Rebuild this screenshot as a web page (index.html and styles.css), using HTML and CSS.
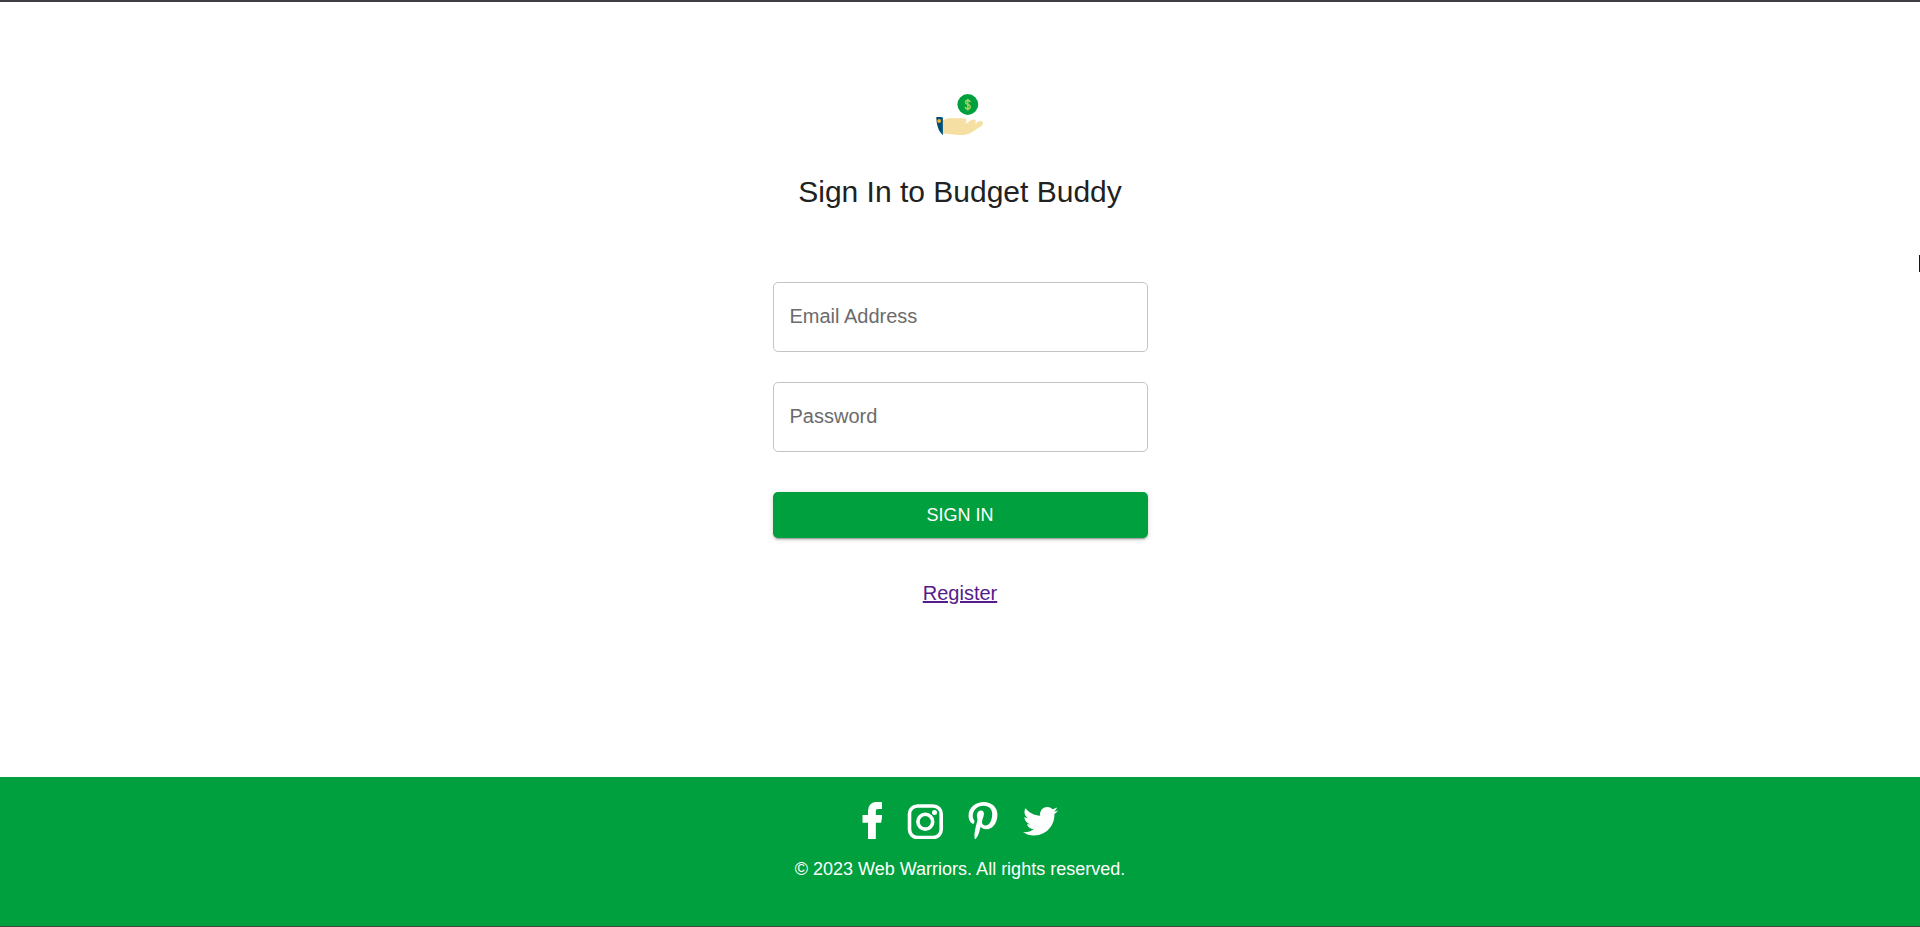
FILE: index.html
```html
<!DOCTYPE html>
<html lang="en">
<head>
<meta charset="utf-8">
<title>Budget Buddy</title>
<link rel="stylesheet" href="styles.css">
</head>
<body>
<div class="page">
  <main class="content">
    <svg class="logo" viewBox="0 0 48 43" aria-hidden="true">
      <circle cx="31.8" cy="11.5" r="10.4" fill="#00a03e"/>
      <path d="M34.2 9C33.900 7.700 33 7.200 31.800 7.200c-1.400 0-2.300.8-2.300 2 0 2.900 4.800 1.700 4.800 4.500 0 1.300-1 2.100-2.500 2.100-1.400 0-2.400-.7-2.600-2M31.800 5.700v11.800" fill="none" stroke="#a5d55c" stroke-width="1.400"/>
      <path d="M6.500 27C8.500 27 10 25.200 13 25.200H27.500c2.200 0 3.300 1.300 3 3-.2 1.300-1 2-2.200 2.700 3.600-.6 6.400-4.300 9.200-4.500 1.700-.1 2.800 1 2.300 2.500l-1 1.800 4.200-2.400c1.700-.8 3.600-.2 4 1.200.3 1.500-.6 3.100-2.200 4-3.600 1.800-6.600 4.700-10.500 6.700C28.500 42.600 22 42.400 15 41.300c-3-.5-5.500-.8-8.500-.8z" fill="#f5dfa2"/>
      <path d="M.3 24H6l.9 1.500V42C2.800 38.500.5 33 .3 24z" fill="#004b70"/>
      <path d="M5.200 24H6l.9 1.500V42l-1.200-1.200V27z" fill="#17678a"/>
      <circle cx="3.100" cy="28" r="1.900" fill="#f7ae2b"/>
    </svg>
    <h1 class="title">Sign In to Budget Buddy</h1>
    <form class="form">
      <input class="field" type="email" placeholder="Email Address" aria-label="Email Address">
      <input class="field" type="password" placeholder="Password" aria-label="Password">
      <button class="submit" type="button">SIGN IN</button>
    </form>
    <a class="register" href="#register">Register</a>
  </main>
  <footer class="footer">
    <nav class="social" aria-label="Social media">
      <a href="#facebook" aria-label="Facebook"><svg class="icon icon-facebook" viewBox="439 -20 904 1704"><path fill="currentColor" stroke="currentColor" stroke-width="50" d="M1343 12v264h-157q-86 0-116 36t-30 108v189h293l-39 296h-254v759h-306v-759h-255v-296h255v-218q0-186 104-288.500t277-102.500q147 0 228 12z"/></svg></a>
      <a href="#instagram" aria-label="Instagram"><svg class="icon icon-instagram" viewBox="0 0 36 37"><rect x="2.500" y="4" width="31.700" height="31.500" rx="8" fill="none" stroke="currentColor" stroke-width="3.600"/><circle cx="18.300" cy="19.700" r="7.400" fill="none" stroke="currentColor" stroke-width="3.600"/><circle cx="27.500" cy="10.600" r="2.500" fill="currentColor"/></svg></a>
      <a href="#pinterest" aria-label="Pinterest"><svg class="icon icon-pinterest" viewBox="0 6 384 492"><path fill="currentColor" d="M204 6.500C101.400 6.500 0 74.900 0 185.600 0 256 39.600 296 63.600 296c9.900 0 15.600-27.600 15.600-35.400 0-9.300-23.700-29.100-23.700-67.800 0-80.400 61.200-137.400 140.400-137.400 68.100 0 118.500 38.700 118.500 109.800 0 53.100-21.300 152.700-90.300 152.700-24.900 0-46.200-18-46.200-43.800 0-37.800 26.400-74.400 26.400-113.400 0-66.200-93.900-54.200-93.900 25.800 0 16.800 2.100 35.400 9.600 50.700-13.800 59.400-42 147.900-42 209.100 0 18.900 2.700 37.500 4.500 56.400 3.400 3.800 1.700 3.400 6.900 1.500 50.400-69 48.600-82.500 71.400-172.800 12.300 23.400 44.100 36 69.300 36 106.200 0 153.900-103.500 153.900-196.800C384 71.300 298.200 6.500 204 6.500z"/></svg></a>
      <a href="#twitter" aria-label="Twitter"><svg class="icon icon-twitter" viewBox="0 -25 512 541"><path fill="currentColor" d="M459.370 151.716c.325 4.548.325 9.097.325 13.645 0 138.720-105.583 298.558-298.558 298.558-59.452 0-114.680-17.219-161.137-47.106 8.447.974 16.568 1.299 25.340 1.299 49.055 0 94.213-16.568 130.274-44.832-46.132-.975-84.792-31.188-98.112-72.772 6.498.974 12.995 1.624 19.818 1.624 9.421 0 18.843-1.300 27.614-3.573-48.081-9.747-84.143-51.980-84.143-102.985v-1.299c13.969 7.797 30.214 12.670 47.431 13.319-28.264-18.843-46.781-51.005-46.781-87.391 0-19.492 5.197-37.360 14.294-52.954 51.655 63.675 129.300 105.258 216.365 109.807-1.624-7.797-2.599-15.918-2.599-24.040 0-57.828 46.782-104.934 104.934-104.934 30.213 0 57.502 12.670 76.670 33.137 23.715-4.548 46.456-13.320 66.599-25.340-7.798 24.366-24.366 44.833-46.132 57.827 21.117-2.273 41.584-8.122 60.426-16.243-14.292 20.791-32.161 39.308-52.628 54.253z"/></svg></a>
    </nav>
    <p class="copyright">© 2023 Web Warriors. All rights reserved.</p>
  </footer>
  <span class="edge-mark" aria-hidden="true"></span>
</div>
</body>
</html>
```

FILE: styles.css
```css
* {
  box-sizing: border-box;
}

body {
  margin: 0;
  background: #fff;
  color: #212121;
  font-family: "Liberation Sans", Arial, sans-serif;
  font-size: 20px;
  line-height: 30px;
}

.page {
  position: relative;
  display: flex;
  flex-direction: column;
  min-height: 100vh;
  border-top: 2px solid #403c44;
  border-bottom: 1px solid #3b4a42;
}

.content {
  flex: 1;
  display: flex;
  flex-direction: column;
  align-items: center;
  padding: 91px 20px 40px;
}

.logo {
  width: 48px;
  height: 43px;
}

.title {
  margin: 36px 0 0;
  font-size: 30px;
  line-height: 40px;
  font-weight: 400;
}

.form {
  display: flex;
  flex-direction: column;
  gap: 30px;
  width: 100%;
  max-width: 375px;
  margin-top: 70px;
}

.field {
  width: 100%;
  height: 70px;
  padding: 0 16px 2px;
  border: 1px solid #c4c4c4;
  border-radius: 5px;
  background: #fff;
  color: #212121;
  font: inherit;
}

.field::placeholder {
  color: #6b6b6b;
  opacity: 1;
}

.submit {
  height: 46px;
  margin-top: 10px;
  padding: 0 20px;
  border: 0;
  border-radius: 5px;
  background: #00a03e;
  box-shadow: 0 3px 1px -2px rgba(0, 0, 0, 0.2), 0 2px 2px rgba(0, 0, 0, 0.14), 0 1px 6px rgba(0, 0, 0, 0.12);
  color: #fff;
  font: inherit;
  font-size: 18px;
  cursor: pointer;
}

.register {
  margin-top: 40px;
  color: #551a8b;
}

.footer {
  display: flex;
  flex-direction: column;
  align-items: center;
  gap: 15px;
  padding: 25px 20px 42px;
  background: #00a03e;
  color: #fff;
}

.social {
  display: flex;
  gap: 25px;
}

.social a {
  display: flex;
  color: inherit;
}

.icon {
  height: 37px;
}

.icon-facebook {
  width: 20px;
}

.icon-instagram {
  width: 36px;
}

.icon-pinterest {
  width: 30px;
}

.icon-twitter {
  width: 35px;
}

.copyright {
  margin: 0;
  font-size: 18px;
}

.edge-mark {
  position: absolute;
  top: 253px;
  right: 0;
  width: 1px;
  height: 17px;
  background: #14121f;
}
```
